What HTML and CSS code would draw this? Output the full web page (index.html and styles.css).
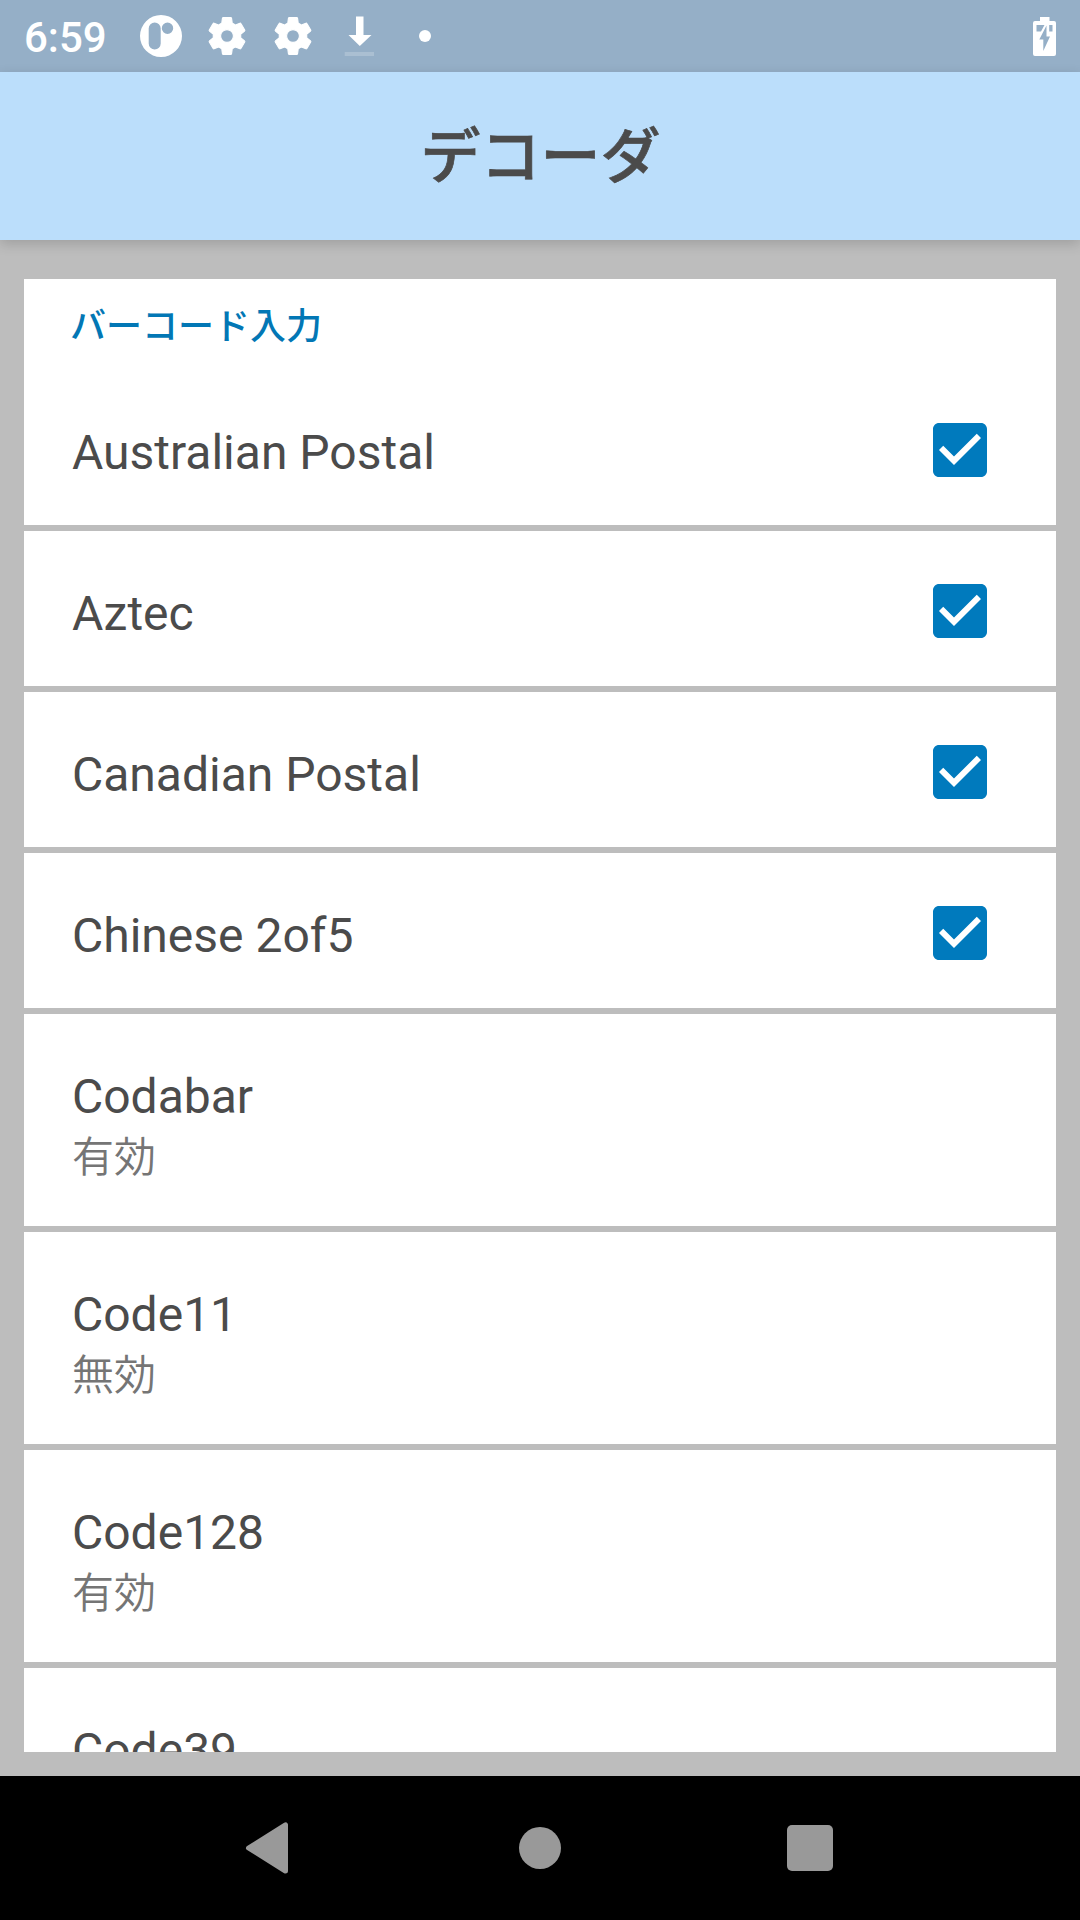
FILE: index.html
```html
<!DOCTYPE html>
<html lang="ja">
<head>
<meta charset="utf-8">
<title>デコーダ</title>
<link rel="stylesheet" href="styles.css">
</head>
<body>
<svg class="defs" aria-hidden="true">
  <symbol id="gear" viewBox="0 0 24 24"><path d="M19.43 12.98c.04-.32.07-.64.07-.98s-.03-.66-.07-.98l2.11-1.65c.19-.15.24-.42.12-.64l-2-3.46c-.12-.22-.39-.3-.61-.22l-2.49 1c-.52-.4-1.08-.73-1.69-.98l-.38-2.65C14.46 2.18 14.25 2 14 2h-4c-.25 0-.46.18-.49.42l-.38 2.65c-.61.25-1.17.59-1.69.98l-2.49-1c-.23-.09-.49 0-.61.22l-2 3.46c-.13.22-.07.49.12.64l2.11 1.65c-.04.32-.07.65-.07.98s.03.66.07.98l-2.11 1.65c-.19.15-.24.42-.12.64l2 3.46c.12.22.39.3.61.22l2.49-1c.52.4 1.08.73 1.69.98l.38 2.65c.03.24.24.42.49.42h4c.25 0 .46-.18.49-.42l.38-2.65c.61-.25 1.17-.59 1.69-.98l2.49 1c.23.09.49 0 .61-.22l2-3.46c.12-.22.07-.49-.12-.64l-2.11-1.65zM12 15.5c-1.93 0-3.5-1.57-3.5-3.5s1.57-3.5 3.5-3.5 3.5 1.57 3.5 3.5-1.57 3.5-3.5 3.5z"/></symbol>
  <symbol id="checked" viewBox="3 3 18 18"><path d="M19 3H5c-1.11 0-2 .9-2 2v14c0 1.1.89 2 2 2h14c1.11 0 2-.9 2-2V5c0-1.1-.89-2-2-2zm-9 14l-5-5 1.41-1.41L10 14.17l7.59-7.59L19 8l-9 9z"/></symbol>
</svg>
<div class="screen">
  <header class="status-bar">
    <span class="clock">6:59</span>
    <div class="notifications">
      <svg class="slot" viewBox="0 0 66 72"><path fill-rule="evenodd" d="M33 15a21 21 0 1 1 0 42a21 21 0 1 1 0-42zM26.7 22.5a6 6 0 0 0-6 6v15a6 6 0 0 0 12 0v-15a6 6 0 0 0-6-6zM39.5 22.5a5.7 5.7 0 1 0 0 11.4a5.7 5.7 0 1 0 0-11.4z"/></svg>
      <span class="slot"><svg class="gear"><use href="#gear"/></svg></span>
      <span class="slot"><svg class="gear"><use href="#gear"/></svg></span>
      <svg class="slot" viewBox="0 0 66 72"><path d="M30 16.5h7.5V35h8L33.8 46L22.5 35H30z"/><path class="faint" d="M18.7 52H48v4H18.7z"/></svg>
      <svg class="slot" viewBox="0 0 66 72"><circle cx="33" cy="36" r="6"/></svg>
    </div>
    <svg class="battery" viewBox="0 0 23 39"><path fill-rule="evenodd" d="M7 0h9.500v4H21a2 2 0 0 1 2 2v31a2 2 0 0 1-2 2H2a2 2 0 0 1-2-2V6a2 2 0 0 1 2-2h5zM3.500 8v6.500h4.500L11.500 8zM16.200 8v6.500h3.300V8zM13.500 8.500L6.300 22.500h4V34L17 19.500h-3.500z"/></svg>
  </header>
  <div class="app-bar"><h1 class="title">デコーダ</h1></div>
  <main class="content">
    <div class="list">
      <section class="group">
        <h2 class="category">バーコード入力</h2>
        <div class="row"><span class="name">Australian Postal</span><svg class="check"><use href="#checked"/></svg></div>
      </section>
      <div class="row"><span class="name">Aztec</span><svg class="check"><use href="#checked"/></svg></div>
      <div class="row"><span class="name">Canadian Postal</span><svg class="check"><use href="#checked"/></svg></div>
      <div class="row"><span class="name">Chinese 2of5</span><svg class="check"><use href="#checked"/></svg></div>
      <div class="row tall"><span class="name">Codabar</span><span class="state">有効</span></div>
      <div class="row tall"><span class="name">Code11</span><span class="state">無効</span></div>
      <div class="row tall"><span class="name">Code128</span><span class="state">有効</span></div>
      <div class="row tall"><span class="name">Code39</span></div>
    </div>
  </main>
  <nav class="nav-bar">
    <svg class="nav-icon" viewBox="0 0 48 48"><path class="rounded" d="M5.500 24L42.500 -.5V48.500z" transform="translate(-3 1.250) scale(1 .948)"/></svg>
    <svg class="nav-icon" viewBox="0 0 48 48"><circle cx="24" cy="24" r="21"/></svg>
    <svg class="nav-icon" viewBox="0 0 48 48"><rect x="1" y="1" width="46" height="46" rx="5"/></svg>
  </nav>
</div>
</body>
</html>
```
FILE: styles.css
```css
* { box-sizing: border-box; }

body {
  margin: 0;
  font-family: Roboto, "Noto Sans CJK JP", sans-serif;
  color: #4b4b4b;
}

.defs { display: none; }

.screen {
  display: flex;
  flex-direction: column;
  width: 1080px;
  height: 1920px;
  overflow: hidden;
  background: #bdbdbd;
}

.status-bar {
  display: flex;
  align-items: center;
  flex: none;
  height: 72px;
  padding: 0 24px;
  background: #95afc7;
  color: #fff;
  fill: #fff;
}

.clock {
  width: 104px;
  padding-top: 3px;
  font-size: 42px;
  line-height: 50px;
  font-weight: 500;
}

.notifications { display: flex; flex: 1; }

.slot {
  display: flex;
  align-items: center;
  justify-content: center;
  width: 66px;
  height: 72px;
}

.gear {
  width: 44px;
  height: 44px;
  stroke: #fff;
  stroke-width: .6;
}

.faint { opacity: .2; }

.battery { width: 23px; height: 39px; }

.app-bar {
  display: flex;
  align-items: center;
  justify-content: center;
  flex: none;
  height: 168px;
  background: #bbdefb;
  box-shadow: 0 4px 12px rgba(0, 0, 0, .16);
}

.title {
  margin: 0;
  padding: 4px 0 0 1px;
  font-size: 60px;
  line-height: 88px;
  font-weight: 500;
  -webkit-text-stroke: .7px currentColor;
}

.content {
  flex: 1;
  min-height: 0;
  padding: 39px 24px 24px;
}

.list {
  display: flex;
  flex-direction: column;
  gap: 6px;
  height: 100%;
  overflow: hidden;
}

.group { flex: none; background: #fff; }

.category {
  height: 91px;
  margin: 0;
  padding: 22px 46px 0;
  font-size: 36px;
  line-height: 53px;
  font-weight: 500;
  color: #0277b5;
}

.row {
  display: flex;
  justify-content: space-between;
  flex: none;
  height: 155px;
  padding: 55px 69px 0 48px;
  background: #fff;
}

.tall {
  flex-direction: column;
  justify-content: flex-start;
  height: 212px;
}

.name { font-size: 48px; line-height: 56px; }

.state {
  margin-top: 2px;
  font-size: 42px;
  line-height: 62px;
  font-weight: 350;
  color: #757575;
}

.check {
  width: 54px;
  height: 54px;
  margin-top: -2px;
  fill: #007abd;
}

.nav-bar {
  display: flex;
  align-items: center;
  justify-content: center;
  gap: 222px;
  flex: none;
  height: 144px;
  background: #000;
}

.nav-icon { width: 48px; height: 48px; fill: #999; overflow: visible; }

.rounded { stroke: #999; stroke-width: 5; stroke-linejoin: round; }
```
